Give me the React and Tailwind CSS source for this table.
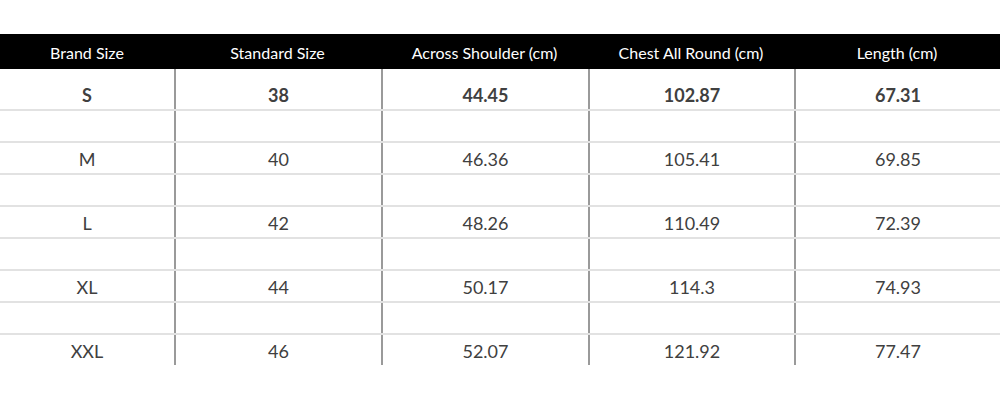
const COLS = ['Brand Size', 'Standard Size', 'Across Shoulder (cm)', 'Chest All Round (cm)', 'Length (cm)']

const ROWS = [
  ['S', '38', '44.45', '102.87', '67.31'],
  ['M', '40', '46.36', '105.41', '69.85'],
  ['L', '42', '48.26', '110.49', '72.39'],
  ['XL', '44', '50.17', '114.3', '74.93'],
  ['XXL', '46', '52.07', '121.92', '77.47']
]

const GRID = 'grid grid-cols-[174px_207px_207px_206px_206px]'

function Row({ cells, bold, first, last }) {
  return (
    <div className={`${GRID} ${last ? '' : 'border-b-2 border-[#e2e2e2]'}`}>
      {cells.map((c, i) => (
        <div
          key={i}
          className={`flex items-center justify-center text-[18px] text-[#404040] ${
            first ? 'h-[40px] pt-[13px]' : 'h-[30px] pt-[2px]'
          } ${bold ? 'font-bold' : ''} ${i > 0 ? 'border-l-2 border-[#9a9a9a]' : ''}`}
        >
          {c}
        </div>
      ))}
    </div>
  )
}

export default function App() {
  return (
    <div className="w-[1000px] h-[400px] bg-white pt-[34px]" style={{ fontFamily: 'Lato, "Open Sans", sans-serif' }}>
      <div className={`${GRID} bg-black h-[35px]`}>
        {COLS.map((c) => (
          <div key={c} className="flex items-center justify-center pt-[2px] text-[16px] text-white">
            {c}
          </div>
        ))}
      </div>
      {ROWS.map((r, idx) => (
        <div key={r[0]}>
          <Row cells={r} bold={idx === 0} first={idx === 0} last={idx === ROWS.length - 1} />
          {idx < ROWS.length - 1 && <Row cells={['', '', '', '', '']} />}
        </div>
      ))}
    </div>
  )
}
